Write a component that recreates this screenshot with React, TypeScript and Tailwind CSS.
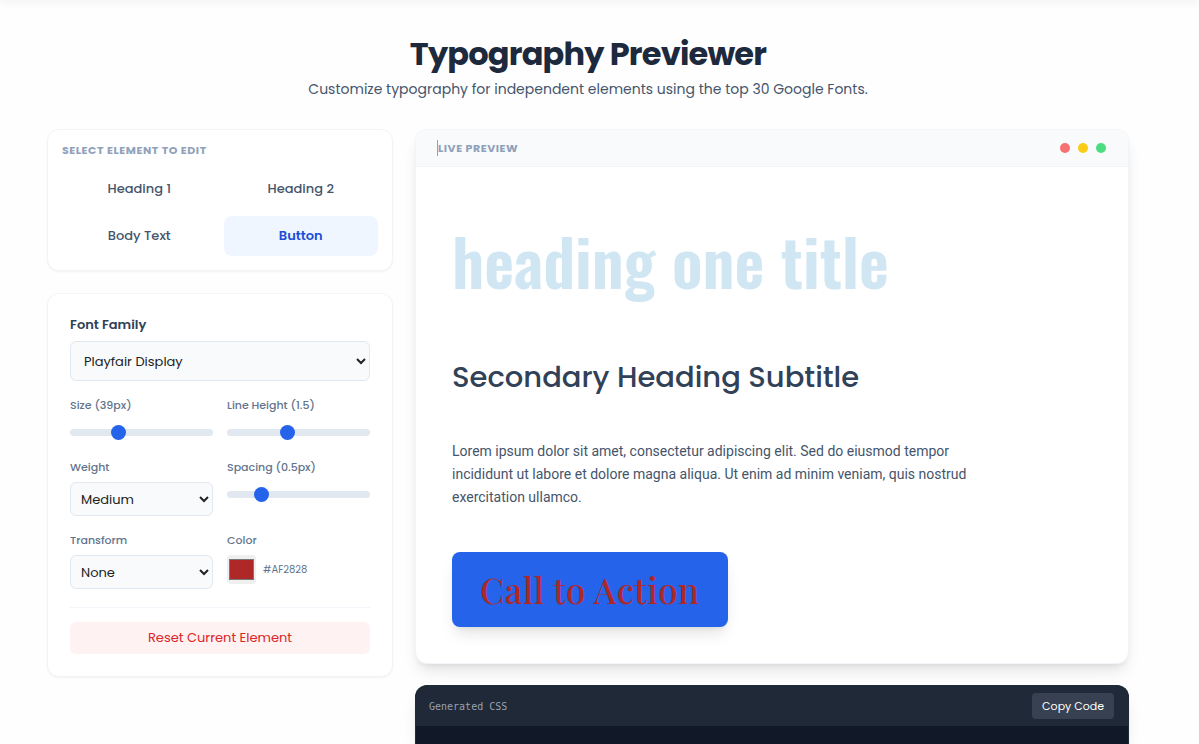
import { useState } from "react";

const elements = ["Heading 1", "Heading 2", "Body Text", "Button"];

const sliderClass =
  "block h-[7px] w-full cursor-pointer appearance-none rounded-full bg-slate-200 [&::-webkit-slider-thumb]:size-[15px] [&::-webkit-slider-thumb]:appearance-none [&::-webkit-slider-thumb]:rounded-full [&::-webkit-slider-thumb]:bg-[#2563eb]";
const selectClass =
  "block w-full rounded-md border border-slate-200 bg-slate-50 text-[#222]";
const labelClass = "block text-[11px] leading-4 font-medium text-slate-500";

export default function App() {
  const [active, setActive] = useState("Button");
  const [size, setSize] = useState(39);
  const [lineHeight, setLineHeight] = useState(1.5);
  const [spacing, setSpacing] = useState(0.5);
  const [color, setColor] = useState("#af2828");

  return (
    <div className="flex min-h-screen flex-col bg-[#fefefe] pr-[23px] font-[Poppins,Inter,sans-serif] text-slate-800">
      <div className="-mr-[23px] h-0 shadow-[0_0_8px_1px_rgba(0,0,0,0.16)]" />
      <main className="mx-auto flex w-full max-w-[1082px] flex-1 flex-col">
        <header className="pt-[34px] pb-[29px] text-center">
          <h1 className="text-[32px] leading-10 font-bold tracking-tight">Typography Previewer</h1>
          <p className="pt-[5px] text-[14px] leading-[21px] text-slate-600">
            Customize typography for independent elements using the top 30 Google Fonts.
          </p>
        </header>

        <div className="grid flex-1 grid-cols-12 gap-[22px]">
          <aside className="col-span-4 flex flex-col gap-[22px]">
            <section className="rounded-xl border border-slate-100 bg-white p-[14px] shadow-xs">
              <h2 className="pb-[13px] text-[11px] leading-3 font-bold tracking-wider text-slate-400 uppercase">
                Select Element to Edit
              </h2>
              <div className="grid grid-cols-2 gap-[7px]">
                {elements.map((name) => (
                  <button
                    key={name}
                    type="button"
                    onClick={() => setActive(name)}
                    className={
                      name === active
                        ? "h-10 rounded-lg bg-[#eff6ff] text-[13px] font-semibold text-[#1d4ed8]"
                        : "h-10 rounded-lg text-[13px] font-medium text-slate-600"
                    }
                  >
                    {name}
                  </button>
                ))}
              </div>
            </section>

            <section className="rounded-xl border border-slate-100 bg-white p-[22px] shadow-xs">
              <label htmlFor="family" className="block pb-[7px] text-[13px] leading-[18px] font-semibold text-slate-700">
                Font Family
              </label>
              <select id="family" className={`${selectClass} h-10 px-[9px] text-[13px]`}>
                <option>Playfair Display</option>
              </select>

              <div className="grid grid-cols-2 gap-x-[14px] pt-4">
                <div className="h-[62px]">
                  <label htmlFor="size" className={labelClass}>{`Size (${size}px)`}</label>
                  <div className="pt-4">
                    <input id="size" type="range" min={10} max={100} value={size} onChange={(e) => setSize(+e.target.value)} className={sliderClass} />
                  </div>
                </div>
                <div className="h-[62px]">
                  <label htmlFor="line" className={labelClass}>{`Line Height (${lineHeight})`}</label>
                  <div className="pt-4">
                    <input id="line" type="range" min={0.8} max={2.5} step={0.1} value={lineHeight} onChange={(e) => setLineHeight(+e.target.value)} className={sliderClass} />
                  </div>
                </div>
                <div className="h-[73px]">
                  <label htmlFor="weight" className={labelClass}>Weight</label>
                  <div className="pt-[7px]">
                    <select id="weight" className={`${selectClass} h-[34px] px-[6px] text-[13px]`}>
                      <option>Medium</option>
                    </select>
                  </div>
                </div>
                <div className="h-[73px]">
                  <label htmlFor="spacing" className={labelClass}>{`Spacing (${spacing}px)`}</label>
                  <div className="pt-4">
                    <input id="spacing" type="range" min={-2} max={10} step={0.5} value={spacing} onChange={(e) => setSpacing(+e.target.value)} className={sliderClass} />
                  </div>
                </div>
                <div>
                  <label htmlFor="transform" className={labelClass}>Transform</label>
                  <div className="pt-[7px]">
                    <select id="transform" className={`${selectClass} h-[34px] px-[6px] text-[13px]`}>
                      <option>None</option>
                    </select>
                  </div>
                </div>
                <div>
                  <label htmlFor="color" className={labelClass}>Color</label>
                  <div className="flex items-center gap-[7px] pt-[7px]">
                    <input id="color" type="color" value={color} onChange={(e) => setColor(e.target.value)} className="size-[29px] rounded-sm bg-[#efefef]" />
                    <span className="text-[10px] leading-4 text-slate-500 uppercase">{color}</span>
                  </div>
                </div>
              </div>

              <div className="mt-[18px] border-t border-slate-100 pt-[14px]">
                <button type="button" className="block h-8 w-full rounded-md bg-[#fef2f2] text-[13px] text-[#dc2626]">
                  Reset Current Element
                </button>
              </div>
            </section>
          </aside>

          <div className="col-span-8 flex flex-col gap-[21px]">
            <section className="overflow-hidden rounded-xl border border-slate-100 bg-white shadow-lg">
              <div className="flex h-[37px] items-center justify-between border-b border-slate-100 bg-slate-50 pr-[22px] pl-[21px]">
                <h2 className="border-l border-slate-400 text-[11px] leading-4 font-bold tracking-wider text-slate-400 uppercase">
                  Live Preview
                </h2>
                <div className="flex gap-2">
                  <span className="size-[10px] rounded-full bg-[#f87171]" />
                  <span className="size-[10px] rounded-full bg-[#facc15]" />
                  <span className="size-[10px] rounded-full bg-[#4ade80]" />
                </div>
              </div>
              <div className="p-9">
                <h1 className="font-[Oswald,sans-serif] text-[65px] leading-[114px] font-semibold text-[#d0e6f3]">
                  heading one title
                </h1>
                <h2 className="pt-[37px] text-[29px] leading-[46px] font-medium text-slate-700">
                  Secondary Heading Subtitle
                </h2>
                <p className="max-w-[530px] pt-10 font-[Roboto,sans-serif] text-[14px] leading-[23px] text-slate-600">
                  Lorem ipsum dolor sit amet, consectetur adipiscing elit. Sed do eiusmod tempor incididunt ut labore et
                  dolore magna aliqua. Ut enim ad minim veniam, quis nostrud exercitation ullamco.
                </p>
                <button
                  type="button"
                  className="mt-[43px] block rounded-lg bg-[#2563eb] px-7 py-[11px] font-['Playfair_Display','Liberation_Serif',serif] text-[35px] leading-[53px] font-medium tracking-[0.5px] text-[#af2828] shadow-lg"
                >
                  Call to Action
                </button>
              </div>
            </section>

            <section className="flex flex-1 flex-col overflow-hidden rounded-t-xl border border-b-0 border-[#1f2937] bg-[#111827] shadow-lg">
              <div className="flex h-10 items-center justify-between bg-[#1f2937] pr-[14px] pl-[13px]">
                <span className="font-['DejaVu_Sans_Mono',monospace] text-[10px] text-gray-400">Generated CSS</span>
                <button type="button" className="h-[26px] rounded bg-[#374151] px-[10px] text-[11px] text-white">
                  Copy Code
                </button>
              </div>
            </section>
          </div>
        </div>
      </main>
    </div>
  );
}
